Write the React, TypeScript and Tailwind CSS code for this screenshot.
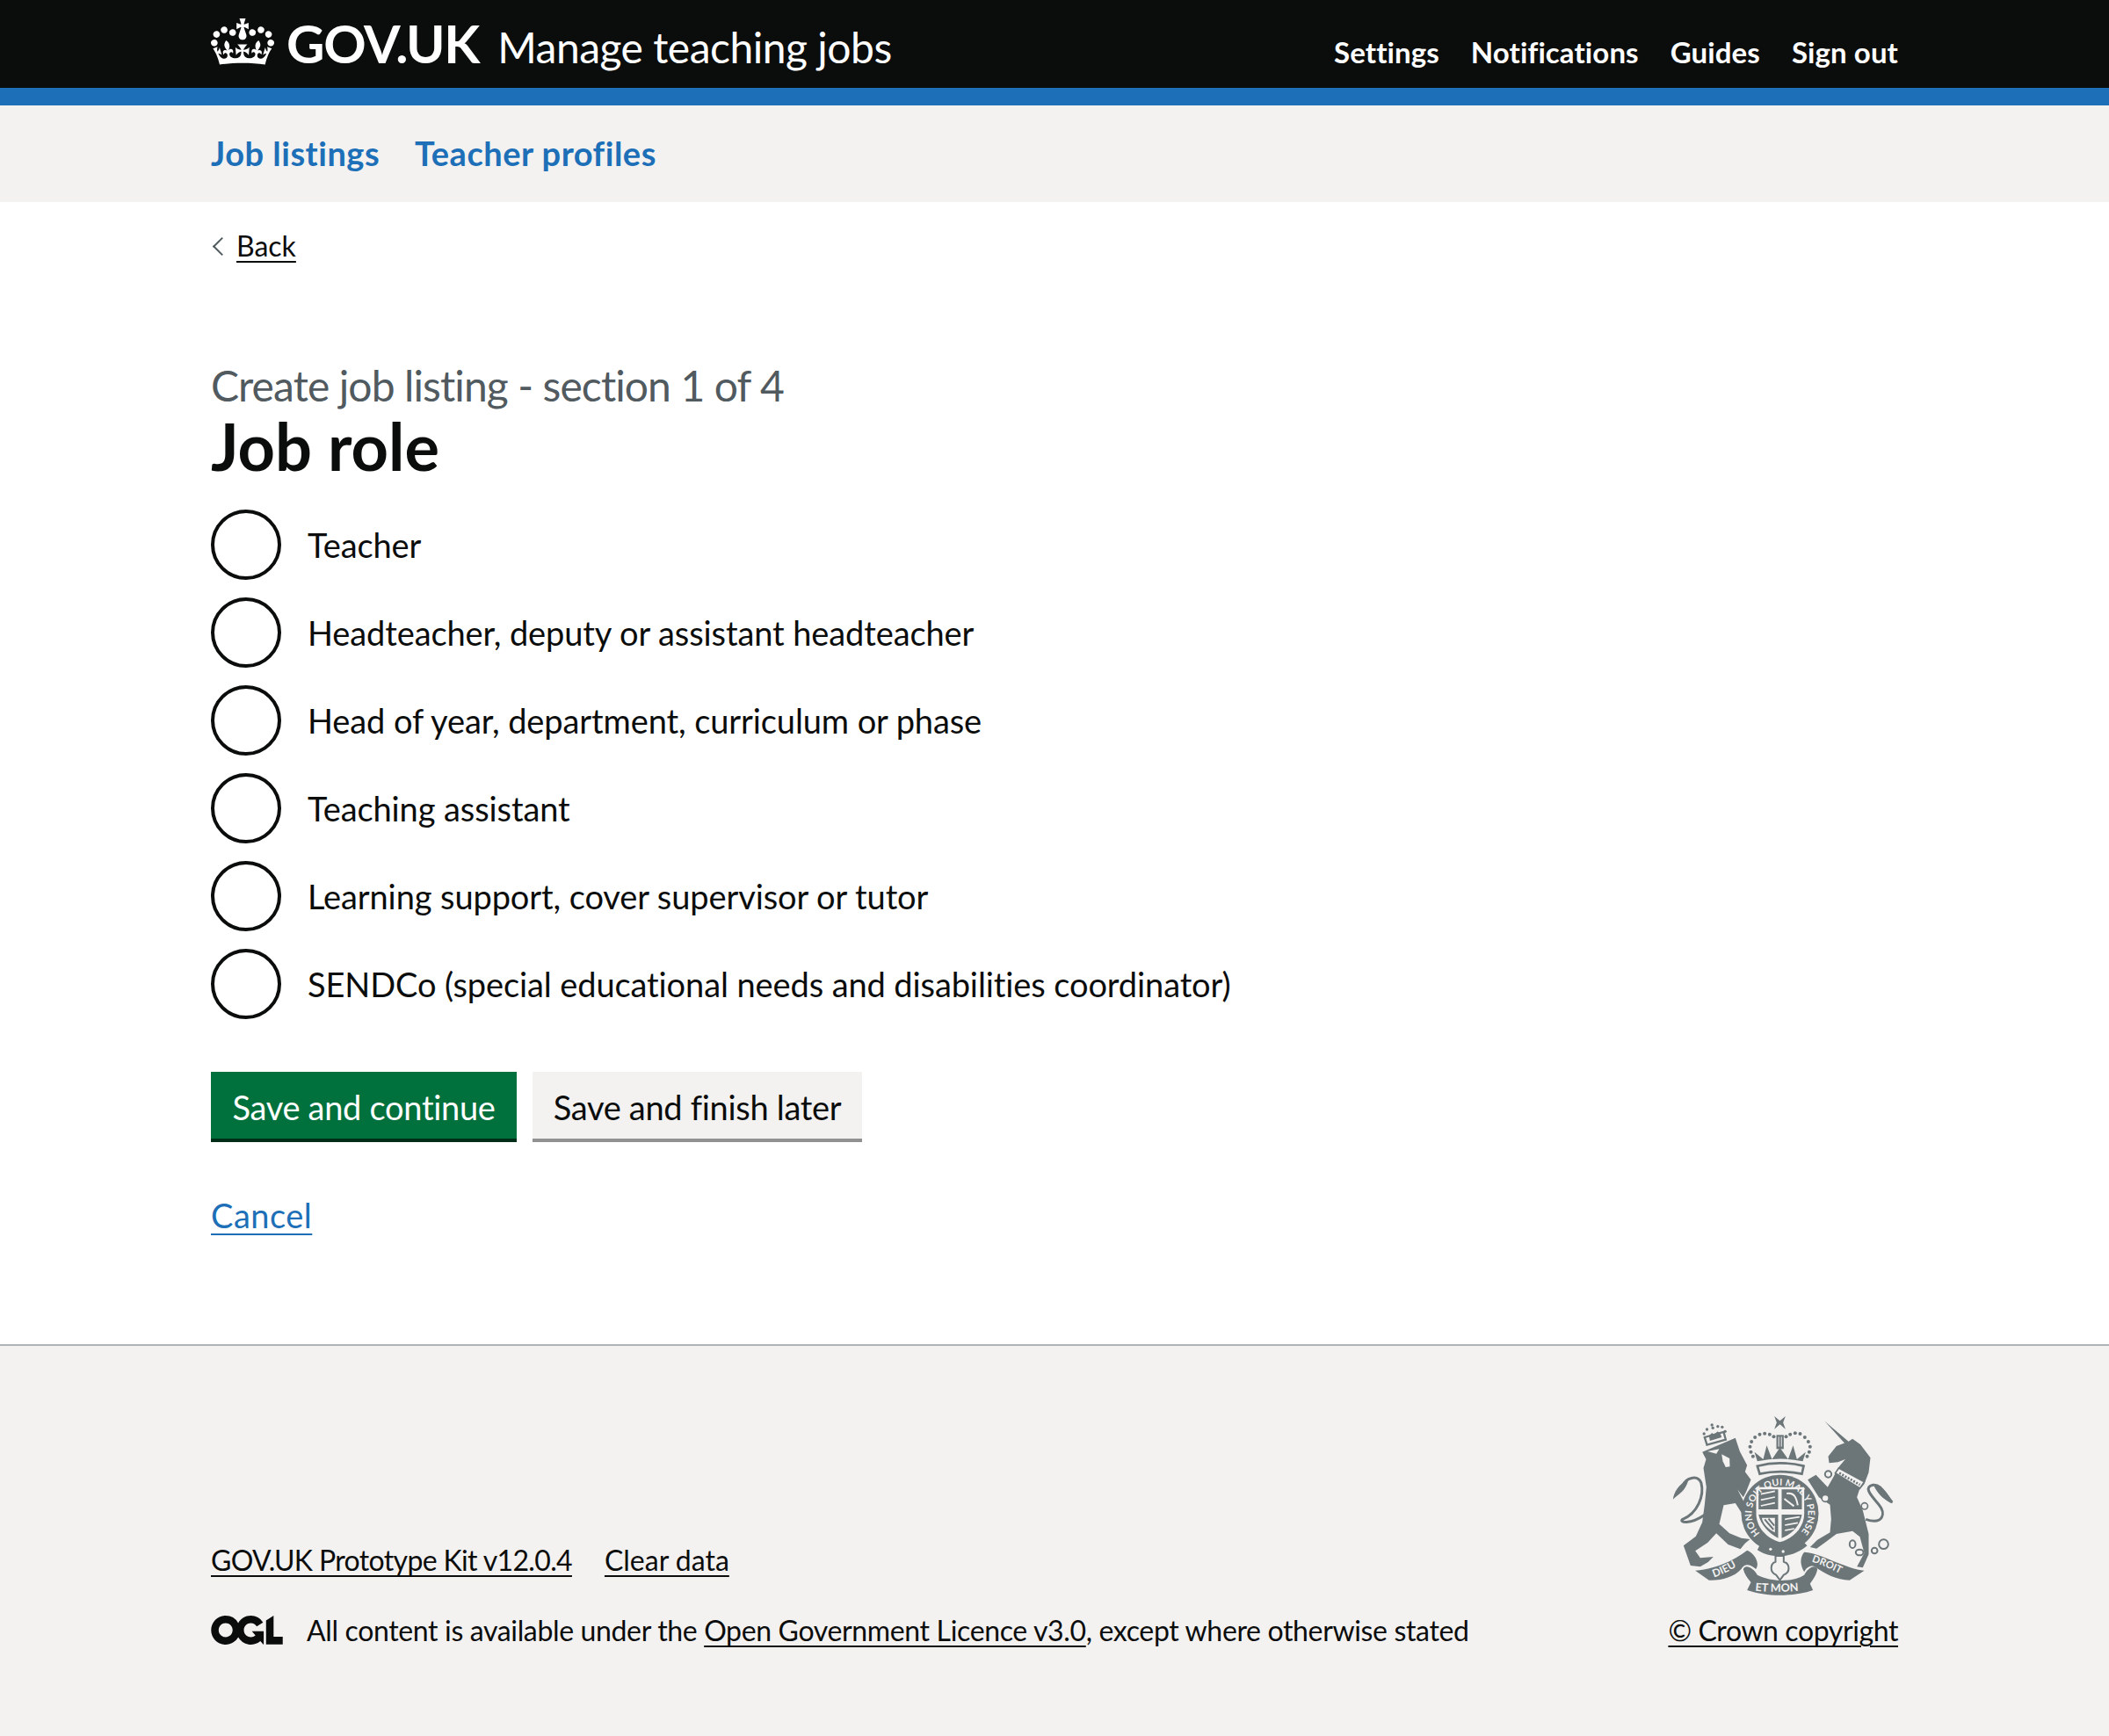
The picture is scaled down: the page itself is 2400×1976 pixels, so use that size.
const crownPath =
  "M25 30.2c3.5 1.5 7.7-.2 9.1-3.7 1.5-3.6-.2-7.8-3.9-9.2-3.6-1.4-7.6.3-9.1 3.9-1.4 3.5.3 7.5 3.9 9zM9 39.5c3.6 1.5 7.8-.2 9.2-3.7 1.5-3.6-.2-7.8-3.9-9.1-3.6-1.5-7.6.2-9.1 3.8-1.4 3.5.3 7.5 3.8 9zM4.4 57.2c3.5 1.5 7.7-.2 9.1-3.8 1.5-3.6-.2-7.7-3.9-9.1-3.5-1.5-7.6.3-9.1 3.8-1.4 3.5.3 7.6 3.9 9.1zm38.3-21.4c3.5 1.5 7.7-.2 9.1-3.8 1.5-3.6-.2-7.7-3.9-9.1-3.6-1.5-7.6.3-9.1 3.8-1.3 3.6.4 7.7 3.9 9.1zm64.4-5.6c-3.6 1.5-7.8-.2-9.1-3.7-1.5-3.6.2-7.8 3.8-9.2 3.6-1.4 7.7.3 9.2 3.9 1.3 3.5-.4 7.5-3.9 9zm15.9 9.3c-3.6 1.5-7.7-.2-9.1-3.7-1.5-3.6.2-7.8 3.7-9.1 3.6-1.5 7.7.2 9.2 3.8 1.5 3.5-.3 7.5-3.8 9zm4.7 17.7c-3.6 1.5-7.8-.2-9.2-3.8-1.5-3.6.2-7.7 3.9-9.1 3.6-1.5 7.7.3 9.2 3.8 1.3 3.5-.4 7.6-3.9 9.1zM89.3 35.8c-3.6 1.5-7.8-.2-9.2-3.8-1.4-3.6.2-7.7 3.9-9.1 3.6-1.5 7.7.3 9.2 3.8 1.4 3.6-.3 7.7-3.9 9.1zM69.7 17.7l8.9 4.7V9.3l-8.9 2.8c-.2-.3-.5-.6-.9-.9L72.4 0H59.6l3.6 11.2c-.3.3-.6.5-.9.9l-8.8-2.8v13.1l8.8-4.7c.3.3.6.7.9.9l-5 15.4v.1c-.2.8-.4 1.6-.4 2.4 0 4.1 3.1 7.5 7 8.1h.2c.3 0 .7.1 1 .1.4 0 .7 0 1-.1h.2c4-.6 7.1-4.1 7.1-8.1 0-.8-.1-1.7-.4-2.4V34l-5.1-15.4c.4-.2.7-.6 1-.9zM66 92.8c16.9 0 32.8 1.1 47.1 3.2 4-16.9 8.9-26.7 14-33.5l-9.6-3.4c1 4.9 1.1 7.2 0 10.2-1.5-1.4-3-4.3-4.2-8.7L108.6 76c2.8-2 5-3.2 7.5-3.3-4.4 9.4-10 11.9-13.6 11.2-4.3-.8-6.3-4.6-5.6-7.9 1-4.7 5.7-5.9 8-.5 4.3-8.7-3-11.4-7.6-8.8 7.1-7.2 7.9-13.5 2.1-21.1-8 6.1-8.1 12.3-4.5 20.8-4.7-5.4-12.1-2.5-9.5 6.2 3.4-5.2 7.9-2 7.2 3.1-.6 4.3-6.4 7.8-13.5 7.2-10.3-.9-10.9-8-11.2-13.8 2.5-.5 7.1 1.8 11 7.3L80.2 60c-4.1 4.4-8 5.3-12.3 5.4 1.4-4.4 8-11.6 8-11.6H55.5s6.4 7.2 7.9 11.6c-4.2-.1-8-1-12.3-5.4l1.4 16.4c3.9-5.5 8.5-7.7 10.9-7.3-.3 5.8-.9 12.8-11.1 13.8-7.2.6-12.9-2.9-13.5-7.2-.7-5 3.8-8.3 7.1-3.1 2.7-8.7-4.6-11.6-9.4-6.2 3.7-8.5 3.6-14.7-4.6-20.8-5.8 7.6-5 13.9 2.2 21.1-4.7-2.6-11.9.1-7.7 8.8 2.3-5.5 7.1-4.2 8.1.5.7 3.3-1.3 7.1-5.7 7.9-3.5.7-9-1.8-13.5-11.2 2.5.1 4.7 1.3 7.5 3.3l-4.7-15.4c-1.2 4.4-2.7 7.2-4.3 8.7-1.1-3-.9-5.3 0-10.2l-9.5 3.4c5 6.9 9.9 16.7 14 33.5 14.8-2.1 30.8-3.2 47.7-3.2z";

const oglPath =
  "M421.5 142.8V.1l-50.7 32.3v161.1h112.4v-50.7zm-122.3-9.6A47.12 47.12 0 0 1 221 97.8c0-26 21.1-47.1 47.1-47.1 16.7 0 31.4 8.7 39.7 21.8l42.7-27.2A97.63 97.63 0 0 0 268.1 0c-36.5 0-68.3 20.1-85.1 49.7A98 98 0 0 0 97.8 0C43.9 0 0 43.9 0 97.8s43.9 97.8 97.8 97.8c36.5 0 68.3-20.1 85.1-49.7a97.76 97.76 0 0 0 149.6 25.4l19.4 22.2h3v-87.8h-80l24.3 27.5zM97.8 145c-26 0-47.1-21.1-47.1-47.1s21.1-47.1 47.1-47.1 47.2 21 47.2 47S123.8 145 97.8 145";

const roles = [
  "Teacher",
  "Headteacher, deputy or assistant headteacher",
  "Head of year, department, curriculum or phase",
  "Teaching assistant",
  "Learning support, cover supervisor or tutor",
  "SENDCo (special educational needs and disabilities coordinator)",
];

const INK = "#6c7679";
const BG = "#f3f2f1";

const Dots = ({ points, r = 6 }: { points: number[][]; r?: number }) => (
  <>
    {points.map(([x, y]) => (
      <circle key={`${x}-${y}`} cx={x} cy={y} r={r} />
    ))}
  </>
);

const Crest = () => (
  <svg viewBox="130 65 755 615" className="w-[252px] h-[205px] mr-[5px]" fill={INK} aria-label="Royal coat of arms">
    <defs>
      <path id="garter" d="M429 468 A96 96 0 1 1 565 468" />
      <path id="scrollL" d="M272 618 Q325 600 378 562" />
      <path id="scrollC" d="M412 664 Q497 672 585 662" />
      <path id="scrollR" d="M605 565 Q670 585 730 622" />
    </defs>

    {/* lion */}
    <path d="M232 190 L345 142 L360 188 L385 235 L378 258 L398 285 L382 325 L372 345 L352 318 L392 395 L408 412 L385 428 L345 365 L305 372 L290 436 L325 468 L365 484 L395 488 L378 502 L362 522 L320 506 L280 468 L250 500 L208 528 L225 552 L270 548 L252 566 L225 582 L192 578 L168 510 L210 478 L232 430 L240 370 L246 310 L236 245 L245 215 Z" />
    <path d="M298 198 L325 212 L326 240 L312 242 L302 222 Z" fill={BG} />
    <path d="M250 188 L290 180 L280 196 Z" fill={BG} />
    <path d="M240 405 C190 440 150 430 165 420 C215 400 240 340 228 295 C215 265 175 280 165 305" fill="none" stroke={INK} strokeWidth="9" />
    <path d="M185 285 C150 300 135 330 132 352 C150 335 175 325 185 285 Z" />
    {/* lion crown */}
    <path d="M240 140 L305 122 L312 148 L248 166 Z" fill="none" stroke={INK} strokeWidth="7" />
    <Dots r={5} points={[[238, 128], [248, 113], [268, 108], [285, 103], [300, 105], [310, 120], [265, 98]]} />
    <path d="M255 135 L265 125 L272 130 L285 120 L295 130 L298 140 L258 152 Z" />

    {/* royal crown */}
    <path d="M420 238 Q497 218 578 238 L572 265 Q497 250 428 265 Z" fill="none" stroke={INK} strokeWidth="8" />
    <path d="M420 222 L410 190 L440 215 L452 168 L470 215 L497 175 L525 215 L542 168 L555 215 L585 190 L575 222 Q497 205 420 222 Z" />
    <Dots
      points={[[398, 190], [395, 172], [400, 155], [412, 140], [428, 130], [445, 127], [462, 130], [476, 138], [518, 138], [532, 130], [549, 126], [566, 128], [582, 140], [594, 155], [600, 172], [597, 190], [405, 205], [590, 205]]}
    />
    <path d="M478 68 L497 84 L516 68 L508 90 L516 112 L497 96 L478 112 L486 90 Z" />
    <path d="M485 132 H510 V180 H485 Z" />
    <path d="M493 138 V172 M502 138 V172" stroke={BG} strokeWidth="3" />

    {/* garter */}
    <circle cx="497" cy="400" r="132" />
    <path d="M416 310 H580 V400 C580 450 540 486 497 498 C455 486 416 450 416 400 Z" fill={BG} />
    <path d="M424 318 H491 V386 H424 Z M503 318 H572 V386 H503 Z M424 404 H491 V484 C460 468 432 440 424 404 Z M503 404 H572 C565 445 535 472 503 484 Z" />
    <path d="M432 334 L480 324 M432 354 L480 344 M432 374 L480 364 M514 420 L564 412 M514 440 L558 432 M514 458 L546 452" stroke={BG} strokeWidth="5" />
    <path d="M520 332 C545 327 553 345 558 372 M512 350 L545 375" stroke={BG} strokeWidth="6" fill="none" />
    <path d="M435 415 L480 415 L480 465 C455 452 440 436 435 415 Z" fill={BG} />
    <path d="M445 420 L475 455 M458 418 L478 442" stroke={INK} strokeWidth="6" />
    <text fill={BG} fontFamily="Lato, sans-serif" fontWeight="700" fontSize="32">
      <textPath href="#garter" textLength="445" lengthAdjust="spacing">HONI SOIT QUI MAL Y PENSE</textPath>
    </text>
    <path d="M430 505 C470 535 530 535 575 495 L590 510 C540 555 465 555 420 525 Z" />
    <circle cx="465" cy="522" r="5" fill={BG} />
    <circle cx="508" cy="530" r="5" fill={BG} />

    {/* unicorn */}
    <path d="M650 85 L732 155 L722 165 Z" />
    <path d="M662 205 L690 170 L730 155 L745 145 L772 165 L806 210 L800 260 L785 300 L768 320 L760 345 L780 390 L800 470 L800 540 L780 585 L760 582 L785 535 L770 480 L745 460 L690 470 L650 500 L622 520 L600 515 L625 490 L668 465 L672 420 L668 370 L630 345 L592 285 L620 268 L660 310 L680 275 L695 245 L720 215 L695 225 L665 228 Z" />
    <path d="M686 262 L698 245 L785 292 L770 314 Z" fill={BG} stroke={INK} strokeWidth="5" />
    <path d="M700 262 L770 302" stroke={INK} strokeWidth="8" strokeDasharray="6 5" />
    <circle cx="662" cy="266" r="11" fill="none" stroke={INK} strokeWidth="6" />
    <circle cx="652" cy="348" r="12" fill={BG} stroke={INK} strokeWidth="5" />
    <circle cx="786" cy="375" r="11" fill={BG} stroke={INK} strokeWidth="5" />
    <Dots r={7} points={[[777, 422], [754, 455]]} />
    <path d="M790 420 C850 440 860 400 835 370 C800 330 785 310 815 303 C840 300 850 325 880 362 C860 350 850 345 840 330" fill="none" stroke={INK} strokeWidth="9" />
    <path d="M815 300 C850 305 870 340 882 365 C850 350 830 335 815 300 Z" />
    <g fill="none" stroke={INK} strokeWidth="6">
      <ellipse cx="745" cy="505" rx="10" ry="13" />
      <ellipse cx="769" cy="533" rx="13" ry="10" />
      <circle cx="820" cy="527" r="10" />
      <circle cx="851" cy="505" r="16" />
    </g>

    {/* scrolls */}
    <path d="M208 595 C280 590 340 560 385 526 C410 535 430 570 415 590 C395 572 375 570 365 590 C340 618 295 630 255 628 Z" />
    <path d="M580 532 C640 535 720 590 785 595 L735 628 C690 628 650 605 620 585 C610 575 590 578 580 600 C565 575 565 550 580 532 Z" />
    <path d="M372 590 C380 570 410 590 420 610 C470 635 540 635 580 610 C590 590 615 570 625 590 C622 610 610 625 600 640 L610 662 C545 685 450 685 385 662 L398 635 C385 620 375 605 372 590 Z" />
    <path d="M482 545 H510 V565 C530 570 535 600 510 610 L497 628 L484 610 C460 600 465 570 482 565 Z" fill="none" stroke={INK} strokeWidth="6" />
    <g fill={BG} fontFamily="Lato, sans-serif" fontWeight="700" fontSize="36">
      <text><textPath href="#scrollL">DIEU</textPath></text>
      <text fontSize="38"><textPath href="#scrollC">ET MON</textPath></text>
      <text fontSize="34"><textPath href="#scrollR">DROIT</textPath></text>
    </g>
  </svg>
);

export default function App() {
  return (
    <div className="min-h-[1976px] flex flex-col bg-white font-['Lato',sans-serif] text-[#0b0c0c] [font-variant-ligatures:none]">
      <header className="bg-[#0b0c0c] h-[100px] text-white">
        <div className="mx-auto w-[1920px] h-full flex items-start justify-between">
          <div className="flex items-center h-[100px]">
            <svg viewBox="0 0 132 97" className="w-[72px] h-[53px] mr-[14px] mb-[5px] fill-white" aria-hidden="true">
              <path fillRule="evenodd" d={crownPath} />
            </svg>
            <span className="text-[60px] font-bold leading-none tracking-[-1.3px] mb-[2px]">GOV.UK</span>
            <span className="text-[48px] leading-none ml-[21px] mt-2 tracking-[-0.5px]">Manage teaching jobs</span>
          </div>
          <nav className="flex gap-9 pt-[37px] text-[33px] font-bold leading-[44px] tracking-[0.1px]">
            <a>Settings</a>
            <a>Notifications</a>
            <a>Guides</a>
            <a>Sign out</a>
          </nav>
        </div>
      </header>
      <div className="h-5 bg-[#1d70b8]" />
      <nav className="bg-[#f3f2f1] h-[110px]">
        <div className="mx-auto w-[1920px] h-full flex items-center gap-10 text-[38px] font-bold text-[#1d70b8] tracking-[0.5px] pb-[2px]">
          <a>Job listings</a>
          <a>Teacher profiles</a>
        </div>
      </nav>

      <main className="mx-auto w-[1920px] flex-none h-[1300px]">
        <a className="inline-flex items-center mt-[30px] text-[32px] leading-10 underline underline-offset-[5px] decoration-2">
          <span className="inline-block w-[15px] h-[15px] border-l-2 border-b-2 border-[#505a5f] rotate-45 mr-[9px] ml-[5px]" />
          Back
        </a>
        <p className="mt-[114px] text-[48px] leading-[50px] text-[#505a5f] tracking-[-0.9px]">Create job listing - section 1 of 4</p>
        <h1 className="text-[74px] leading-[80px] font-bold mt-1">Job role</h1>
        <div className="flex flex-col gap-5 mt-[32px]">
          {roles.map((role) => (
            <label key={role} className="flex items-center gap-[30px] h-20 text-[38px] tracking-[-0.1px]">
              <span className="w-20 h-20 flex-none rounded-full border-4 border-[#0b0c0c] bg-white" />
              {role}
            </label>
          ))}
        </div>
        <div className="flex gap-[18px] mt-[60px]">
          <button className="h-20 w-[348px] bg-[#00703c] text-white text-[38px] tracking-[-0.3px] shadow-[inset_0_-4px_0_#002d18]">
            Save and continue
          </button>
          <button className="h-20 w-[375px] bg-[#f3f2f1] text-[38px] tracking-[-0.3px] shadow-[inset_0_-4px_0_#929191]">
            Save and finish later
          </button>
        </div>
        <a className="inline-block mt-[60px] text-[38px] leading-[46px] text-[#1d70b8] tracking-[0.5px] underline underline-offset-[6px] decoration-2">
          Cancel
        </a>
      </main>

      <footer className="flex-1 bg-[#f3f2f1] border-t-2 border-[#b1b4b6]">
        <div className="mx-auto w-[1920px] flex items-end justify-between pt-[79px]">
          <div className="text-[32px] leading-10">
            <div className="flex gap-[37px]">
              <a className="underline underline-offset-[5px] decoration-2 tracking-[-0.65px]">GOV.UK Prototype Kit v12.0.4</a>
              <a className="underline underline-offset-[5px] decoration-2">Clear data</a>
            </div>
            <div className="flex items-center mt-10">
              <svg viewBox="0 0 483.2 195.7" className="w-[82px] h-[33px] mr-[27px] mb-[2px] fill-[#0b0c0c]" aria-hidden="true">
                <path d={oglPath} />
              </svg>
              <span className="tracking-[-0.35px]">
                All content is available under the{" "}
                <a className="underline underline-offset-[5px] decoration-2">Open Government Licence v3.0</a>, except where
                otherwise stated
              </span>
            </div>
          </div>
          <div className="flex flex-col items-end">
            <Crest />
            <a className="mt-[20px] text-[32px] leading-10 tracking-[-0.4px] underline underline-offset-[5px] decoration-2">© Crown copyright</a>
          </div>
        </div>
      </footer>
    </div>
  );
}
